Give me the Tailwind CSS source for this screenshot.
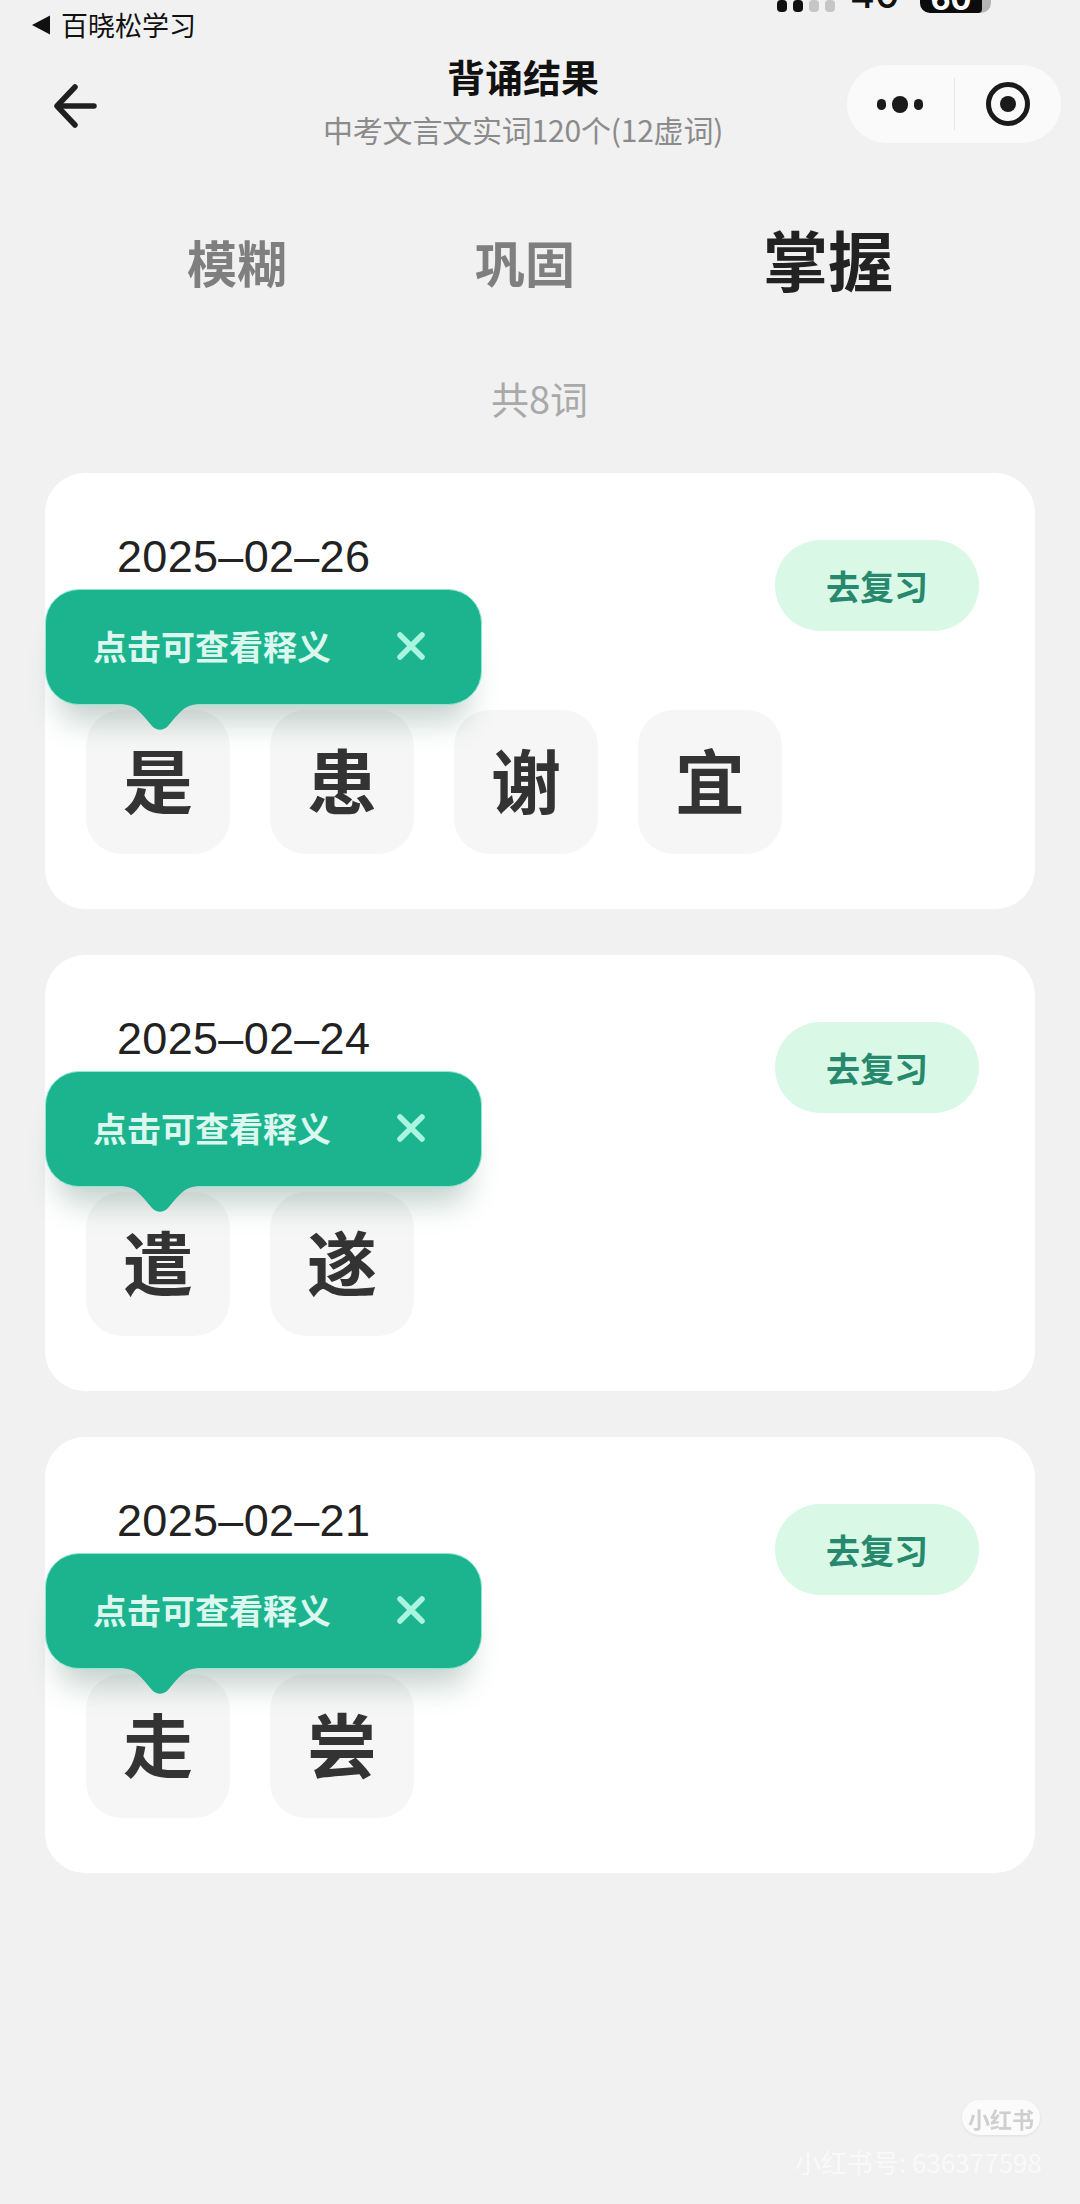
<!DOCTYPE html>
<html lang="zh-CN">
<head>
<meta charset="UTF-8" />
<script src="https://cdn.jsdelivr.net/npm/@tailwindcss/browser@4"></script>
<title>背诵结果</title>
</head>
<body class="bg-[#f1f1f1]">
<div class="relative w-[1080px] h-[2204px] overflow-hidden bg-[#f1f1f1] font-['Noto_Sans_CJK_SC','Noto_Sans',sans-serif]">

  <!-- status bar, clipped at the top of the picture -->
  <div class="relative h-[50px]">
    <div class="flex items-center pl-[31px] pt-[8px] h-[42px]">
      <svg width="20" height="20" viewBox="0 0 20 20" class="mr-[10px]"><path d="M19 0.5V19.5L1 10Z" fill="#111"/></svg>
      <span class="text-[27px] leading-[34px] text-[#111]">百晓松学习</span>
    </div>
    <div class="absolute top-[-8px] left-[777px] flex items-end gap-[6px] h-[20px]">
      <span class="w-[10px] h-[12px] rounded-[4px] bg-[#111]"></span>
      <span class="w-[10px] h-[12px] rounded-[4px] bg-[#111]"></span>
      <span class="w-[10px] h-[12px] rounded-[4px] bg-[#c6c6c6]"></span>
      <span class="w-[10px] h-[12px] rounded-[4px] bg-[#c6c6c6]"></span>
    </div>
    <span class="absolute top-[-26px] left-[850px] text-[38px] leading-[40px] font-medium text-[#111] font-['Inter',sans-serif]">40</span>
    <div class="absolute top-[-24px] left-[920px] w-[71px] h-[37px] rounded-[10px] bg-[#b5b5b5] overflow-hidden">
      <div class="w-[62px] h-full bg-[#0c0c0c] rounded-r-[4px] flex items-end justify-center">
        <span class="text-[31px] leading-[36px] font-bold text-white font-['Inter',sans-serif] mb-[-4px]">60</span>
      </div>
    </div>
  </div>

  <!-- nav bar -->
  <div class="relative h-[100px]">
    <svg width="44" height="44" viewBox="0 0 44 44" class="absolute left-[53px] top-[34px]" fill="none" stroke="#1f1f1f" stroke-width="5.5" stroke-linecap="round" stroke-linejoin="round"><path d="M22 3L4 22L22 41"/><path d="M5 22H41"/></svg>
    <div class="absolute left-[323px] w-[400px] top-[6px] text-center">
      <div class="text-[38px] leading-[40px] font-bold text-[#111]">背诵结果</div>
      <div class="mt-[18px] text-[30px] leading-[30px] text-[#8b8b8b] whitespace-nowrap tracking-[-0.2px]">中考文言文实词120个(12虚词)</div>
    </div>
    <div class="absolute left-[847px] top-[15px] w-[214px] h-[78px] rounded-full bg-[#fafafa] flex items-center">
      <div class="w-[107px] flex items-center justify-center gap-[6px] pr-[2px]">
        <span class="w-[9px] h-[11px] rounded-full bg-[#1a1a1a]"></span>
        <span class="w-[16px] h-[17px] rounded-full bg-[#1a1a1a]"></span>
        <span class="w-[9px] h-[11px] rounded-full bg-[#1a1a1a]"></span>
      </div>
      <div class="w-px h-[52px] bg-[#e6e6e6]"></div>
      <div class="flex-1 flex items-center justify-center">
        <svg width="46" height="46" viewBox="0 0 46 46"><circle cx="23" cy="23" r="19.5" fill="none" stroke="#1a1a1a" stroke-width="5"/><circle cx="23" cy="23" r="8" fill="#1a1a1a"/></svg>
      </div>
    </div>
  </div>

  <!-- tabs -->
  <div class="relative h-[108px] mt-[61px]">
    <span class="absolute left-[187px] top-[25px] text-[50px] leading-[50px] font-bold text-[#7f7f7f]">模糊</span>
    <span class="absolute left-[475px] top-[25px] text-[50px] leading-[50px] font-bold text-[#7f7f7f]">巩固</span>
    <span class="absolute left-[763px] top-[13px] text-[65px] leading-[68px] font-bold text-[#222]">掌握</span>
  </div>

  <div class="mt-[59px] text-center w-[1079px] text-[38px] leading-[40px] text-[#a9a9a9]">共8词</div>

  <div class="mt-[55px] mx-[45px] flex flex-col gap-[46px]">

    <div class="relative h-[436px] rounded-[40px] bg-white pt-[61px] px-[41px]">
      <div class="flex justify-between items-start pl-[31px] pr-[15px]">
        <span class="text-[45px] leading-[46px] tracking-[0.3px] text-[#222] font-['Liberation_Sans',sans-serif]">2025–02–26</span>
        <button class="mt-[6px] w-[204px] h-[91px] rounded-full bg-[#d9f8e6] text-[34px] font-bold text-[#26896d]">去复习</button>
      </div>
      <div class="mt-[79px] flex gap-[40px]">
        <div class="w-[144px] h-[144px] pb-[8px] rounded-[36px] bg-[#f6f6f6] flex items-center justify-center text-[70px] font-bold text-[#333]">是</div>
        <div class="w-[144px] h-[144px] pb-[8px] rounded-[36px] bg-[#f6f6f6] flex items-center justify-center text-[70px] font-bold text-[#333]">患</div>
        <div class="w-[144px] h-[144px] pb-[8px] rounded-[36px] bg-[#f6f6f6] flex items-center justify-center text-[70px] font-bold text-[#333]">谢</div>
        <div class="w-[144px] h-[144px] pb-[8px] rounded-[36px] bg-[#f6f6f6] flex items-center justify-center text-[70px] font-bold text-[#333]">宜</div>
      </div>
      <div class="absolute left-0 top-[116px] w-[437px]">
        <div class="h-[116px] pb-[3px] rounded-[34px] bg-[#1bb48f] border border-[#8fe8d0] shadow-[0_30px_30px_-14px_rgba(40,90,75,0.28)] flex items-center justify-between pl-[47px] pr-[56px]">
          <span class="text-[34px] leading-[40px] font-bold text-[#dcf7ee]">点击可查看释义</span>
          <svg width="28" height="28" viewBox="0 0 28 28" fill="none" stroke="#a9f5e0" stroke-width="5.5" stroke-linecap="round"><path d="M3 3L25 25M25 3L3 25"/></svg>
        </div>
        <svg width="76" height="27" viewBox="0 0 76 27" class="absolute left-[77px] top-[115px]"><path d="M0 0H76C62 1 58 8 46 22C41 27 35 27 30 22C18 8 14 1 0 0Z" fill="#1bb48f"/></svg>
      </div>
    </div>

    <div class="relative h-[436px] rounded-[40px] bg-white pt-[61px] px-[41px]">
      <div class="flex justify-between items-start pl-[31px] pr-[15px]">
        <span class="text-[45px] leading-[46px] tracking-[0.3px] text-[#222] font-['Liberation_Sans',sans-serif]">2025–02–24</span>
        <button class="mt-[6px] w-[204px] h-[91px] rounded-full bg-[#d9f8e6] text-[34px] font-bold text-[#26896d]">去复习</button>
      </div>
      <div class="mt-[79px] flex gap-[40px]">
        <div class="w-[144px] h-[144px] pb-[8px] rounded-[36px] bg-[#f6f6f6] flex items-center justify-center text-[70px] font-bold text-[#333]">遣</div>
        <div class="w-[144px] h-[144px] pb-[8px] rounded-[36px] bg-[#f6f6f6] flex items-center justify-center text-[70px] font-bold text-[#333]">遂</div>
      </div>
      <div class="absolute left-0 top-[116px] w-[437px]">
        <div class="h-[116px] pb-[3px] rounded-[34px] bg-[#1bb48f] border border-[#8fe8d0] shadow-[0_30px_30px_-14px_rgba(40,90,75,0.28)] flex items-center justify-between pl-[47px] pr-[56px]">
          <span class="text-[34px] leading-[40px] font-bold text-[#dcf7ee]">点击可查看释义</span>
          <svg width="28" height="28" viewBox="0 0 28 28" fill="none" stroke="#a9f5e0" stroke-width="5.5" stroke-linecap="round"><path d="M3 3L25 25M25 3L3 25"/></svg>
        </div>
        <svg width="76" height="27" viewBox="0 0 76 27" class="absolute left-[77px] top-[115px]"><path d="M0 0H76C62 1 58 8 46 22C41 27 35 27 30 22C18 8 14 1 0 0Z" fill="#1bb48f"/></svg>
      </div>
    </div>

    <div class="relative h-[436px] rounded-[40px] bg-white pt-[61px] px-[41px]">
      <div class="flex justify-between items-start pl-[31px] pr-[15px]">
        <span class="text-[45px] leading-[46px] tracking-[0.3px] text-[#222] font-['Liberation_Sans',sans-serif]">2025–02–21</span>
        <button class="mt-[6px] w-[204px] h-[91px] rounded-full bg-[#d9f8e6] text-[34px] font-bold text-[#26896d]">去复习</button>
      </div>
      <div class="mt-[79px] flex gap-[40px]">
        <div class="w-[144px] h-[144px] pb-[8px] rounded-[36px] bg-[#f6f6f6] flex items-center justify-center text-[70px] font-bold text-[#333]">走</div>
        <div class="w-[144px] h-[144px] pb-[8px] rounded-[36px] bg-[#f6f6f6] flex items-center justify-center text-[70px] font-bold text-[#333]">尝</div>
      </div>
      <div class="absolute left-0 top-[116px] w-[437px]">
        <div class="h-[116px] pb-[3px] rounded-[34px] bg-[#1bb48f] border border-[#8fe8d0] shadow-[0_30px_30px_-14px_rgba(40,90,75,0.28)] flex items-center justify-between pl-[47px] pr-[56px]">
          <span class="text-[34px] leading-[40px] font-bold text-[#dcf7ee]">点击可查看释义</span>
          <svg width="28" height="28" viewBox="0 0 28 28" fill="none" stroke="#a9f5e0" stroke-width="5.5" stroke-linecap="round"><path d="M3 3L25 25M25 3L3 25"/></svg>
        </div>
        <svg width="76" height="27" viewBox="0 0 76 27" class="absolute left-[77px] top-[115px]"><path d="M0 0H76C62 1 58 8 46 22C41 27 35 27 30 22C18 8 14 1 0 0Z" fill="#1bb48f"/></svg>
      </div>
    </div>
  </div>

  <!-- watermark over the page -->
  <div class="absolute left-[962px] top-[2100px] w-[78px] h-[35px] rounded-full bg-[#fbfbfb] shadow-[0_1px_3px_rgba(0,0,0,0.08)] flex items-center justify-center text-[22px] leading-[24px] font-bold text-[#cfcfcf] blur-[0.6px] whitespace-nowrap">小红书</div>
  <div class="absolute left-[795px] top-[2146px] text-[26px] leading-[32px] text-[#f9f9f9] blur-[0.6px] whitespace-nowrap">小红书号: 636377598</div>
</div>
</body>
</html>
